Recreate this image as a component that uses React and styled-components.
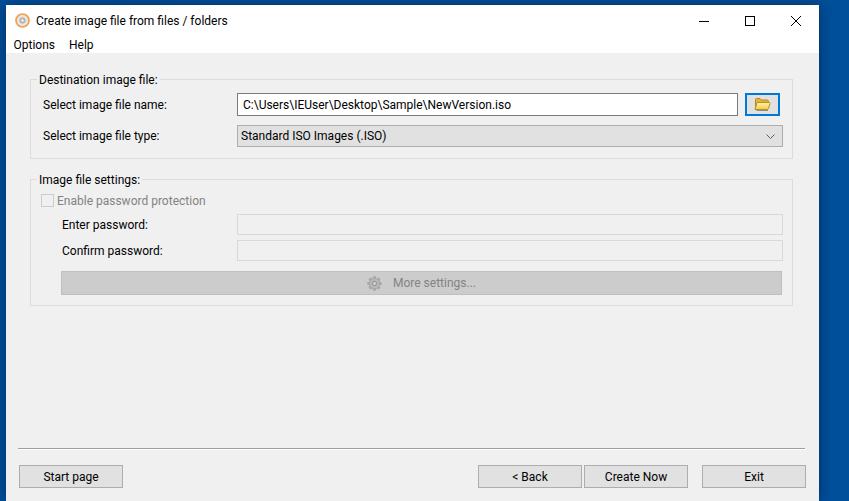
import React from 'react';
import styled, { createGlobalStyle } from 'styled-components';

const GlobalStyle = createGlobalStyle`
  html, body {
    margin: 0;
    height: 100%;
    overflow: hidden;
    background: #00509c;
  }
  body {
    font-family: Roboto, "Open Sans", sans-serif;
    font-size: 12px;
    color: #000;
  }
`;

const Desktop = styled.div`
  width: 849px;
  height: 501px;
  padding: 5px 0 0 6px;
  box-sizing: border-box;
  overflow: hidden;
`;

const Window = styled.div`
  width: 813px;
  height: 496px;
  display: flex;
  flex-direction: column;
  background: #f0f0f0;
  box-shadow: 0 0 14px rgba(0, 10, 40, 0.5);
`;

const TitleBar = styled.div`
  height: 31px;
  display: flex;
  align-items: center;
  background: #fff;
  padding-left: 9px;
`;

const Title = styled.div`
  margin-left: 6px;
  flex: 1;
  white-space: nowrap;
`;

const WinButton = styled.div`
  width: 46px;
  height: 29px;
  display: flex;
  align-items: center;
  justify-content: center;
`;

const MenuBar = styled.div`
  height: 17px;
  display: flex;
  align-items: center;
  gap: 14px;
  background: #fff;
  padding-left: 7.5px;
`;

const MenuItem = styled.div``;

const Content = styled.div`
  flex: 1;
  display: flex;
  flex-direction: column;
  padding: 26px 26px 0 24px;
`;

const Group = styled.div`
  position: relative;
  border: 1px solid #dcdcdc;
  box-sizing: border-box;
  height: ${props => props.height}px;
  margin-bottom: 20px;
  display: flex;
  flex-direction: column;
`;

const Legend = styled.div`
  position: absolute;
  top: -8px;
  left: 6px;
  padding: 0 2px;
  background: #f0f0f0;
  line-height: 16px;
`;

const Row = styled.div`
  display: flex;
  align-items: center;
  height: ${props => props.height}px;
  margin-top: ${props => props.top}px;
  padding-left: ${props => props.indent}px;
  padding-right: ${props => props.right || 9}px;
`;

const Label = styled.div`
  width: ${props => props.width}px;
  flex: none;
`;

const PathInput = styled.div`
  width: 501px;
  height: 23px;
  box-sizing: border-box;
  border: 1px solid #7a7a7a;
  background: #fff;
  display: flex;
  align-items: center;
  padding-left: 5px;
  white-space: nowrap;
`;

const BrowseButton = styled.div`
  width: 35px;
  height: 23px;
  margin-left: 7px;
  box-sizing: border-box;
  border: 2px solid #0078d7;
  background: #e1e1e1;
  display: flex;
  align-items: center;
  justify-content: center;
`;

const Select = styled.div`
  flex: 1;
  height: 22px;
  box-sizing: border-box;
  border: 1px solid #adadad;
  background: #e1e1e1;
  display: flex;
  align-items: center;
  justify-content: space-between;
  padding: 0 4px 0 3px;
`;

const DisabledInput = styled.div`
  flex: 1;
  height: 21px;
  box-sizing: border-box;
  border: 1px solid #d9d9d9;
  background: #f0f0f0;
`;

const Checkbox = styled.div`
  width: 13px;
  height: 13px;
  box-sizing: border-box;
  border: 1px solid #cccccc;
  background: #f0f0f0;
  margin-right: 3px;
`;

const DisabledText = styled.div`
  color: #838383;
`;

const SettingsButton = styled.div`
  flex: 1;
  height: 24px;
  box-sizing: border-box;
  background: #cccccc;
  border: 1px solid #bfbfbf;
  color: #838383;
  display: flex;
  align-items: center;
  justify-content: center;
  gap: 11px;
`;

const Footer = styled.div`
  margin: auto -12px 0;
  padding-bottom: 13px;
`;

const Divider = styled.div`
  height: 1px;
  background: #a0a0a0;
  border-bottom: 1px solid #fff;
  margin-bottom: 15px;
`;

const ButtonRow = styled.div`
  display: flex;
  padding-left: 1px;
  margin-right: -1px;
`;

const PageButton = styled.div`
  width: 104px;
  height: 23px;
  box-sizing: border-box;
  border: 1px solid #adadad;
  background: #e1e1e1;
  display: flex;
  align-items: center;
  justify-content: center;
  margin-left: ${props => props.gap || 0}px;
`;

const DiscIcon = () => (
  <svg width="15" height="15" viewBox="0 0 15 15">
    <circle cx="7.5" cy="7.5" r="6.5" fill="#e8e4df" stroke="#f0a050" strokeWidth="1.7" />
    <circle cx="7.5" cy="7.5" r="2.6" fill="#c9c6c2" stroke="#9a9a9a" strokeWidth="0.8" />
    <circle cx="7.5" cy="7.5" r="1" fill="#fff" />
  </svg>
);

const FolderIcon = () => (
  <svg width="17" height="15" viewBox="0 0 17 15">
    <defs>
      <linearGradient id="folderFront" x1="0" y1="0" x2="0" y2="1">
        <stop offset="0" stopColor="#fff2a8" />
        <stop offset="1" stopColor="#f2cd4e" />
      </linearGradient>
    </defs>
    <path d="M1.5 12.5V2.5Q1.5 1.5 2.5 1.5H6L7.5 3H13Q14.5 3 14.5 4.5V6H5L1.5 12.5Z" fill="#e3b33b" stroke="#b5891f" strokeWidth="1" />
    <path d="M1 12.5L3 5.5H15.5Q16.2 5.5 16 6.5L14.5 11.5Q14.2 12.5 13 12.5Z" fill="url(#folderFront)" stroke="#b8901f" strokeWidth="1" />
    <path d="M2.5 13.5H14" stroke="#8d8d8d" strokeWidth="1" />
  </svg>
);

const GearIcon = () => {
  const teeth = [0, 45, 90, 135];
  return (
    <svg width="15" height="15" viewBox="0 0 15 15">
      {teeth.map((angle) => (
        <rect key={angle} x="6" y="0.3" width="3" height="14.4" fill="#a9a9a9" transform={`rotate(${angle} 7.5 7.5)`} />
      ))}
      <circle cx="7.5" cy="7.5" r="5.3" fill="#b9b9b9" stroke="#a0a0a0" strokeWidth="0.8" />
      <circle cx="7.5" cy="7.5" r="2.2" fill="#cccccc" stroke="#8e8e8e" strokeWidth="1" />
    </svg>
  );
};

const Chevron = () => (
  <svg width="9" height="5" viewBox="0 0 9 5" style={{ marginRight: 3 }}>
    <path d="M0.5 0.5L4.5 4.5L8.5 0.5" fill="none" stroke="#606060" strokeWidth="1" />
  </svg>
);

const App = () => (
  <>
    <GlobalStyle />
    <Desktop>
      <Window>
        <TitleBar>
          <DiscIcon />
          <Title>Create image file from files / folders</Title>
          <WinButton>
            <svg width="10" height="10" viewBox="0 0 10 10"><path d="M0 5.5H10" stroke="#000" /></svg>
          </WinButton>
          <WinButton>
            <svg width="10" height="10" viewBox="0 0 10 10"><rect x="0.5" y="0.5" width="9" height="9" fill="none" stroke="#000" /></svg>
          </WinButton>
          <WinButton>
            <svg width="10" height="10" viewBox="0 0 10 10"><path d="M0 0L10 10M10 0L0 10" stroke="#000" /></svg>
          </WinButton>
        </TitleBar>
        <MenuBar>
          <MenuItem>Options</MenuItem>
          <MenuItem>Help</MenuItem>
        </MenuBar>
        <Content>
          <Group height={80}>
            <Legend>Destination image file:</Legend>
            <Row height={23} top={13} indent={12}>
              <Label width={194}>Select image file name:</Label>
              <PathInput>C:\Users\IEUser\Desktop\Sample\NewVersion.iso</PathInput>
              <BrowseButton><FolderIcon /></BrowseButton>
            </Row>
            <Row height={22} top={9} indent={12}>
              <Label width={194}>Select image file type:</Label>
              <Select>
                Standard ISO Images (.ISO)
                <Chevron />
              </Select>
            </Row>
          </Group>
          <Group height={127}>
            <Legend>Image file settings:</Legend>
            <Row height={13} top={14} indent={10}>
              <Checkbox />
              <DisabledText>Enable password protection</DisabledText>
            </Row>
            <Row height={21} top={7} indent={31}>
              <Label width={175}>Enter password:</Label>
              <DisabledInput />
            </Row>
            <Row height={21} top={5} indent={31}>
              <Label width={175}>Confirm password:</Label>
              <DisabledInput />
            </Row>
            <Row height={24} top={10} indent={30} right={10}>
              <SettingsButton>
                <GearIcon />
                More settings...
              </SettingsButton>
            </Row>
          </Group>
          <Footer>
            <Divider />
            <ButtonRow>
              <PageButton>Start page</PageButton>
              <PageButton gap={355}>&lt; Back</PageButton>
              <PageButton gap={2}>Create Now</PageButton>
              <PageButton gap={14}>Exit</PageButton>
            </ButtonRow>
          </Footer>
        </Content>
      </Window>
    </Desktop>
  </>
);

export default App;
